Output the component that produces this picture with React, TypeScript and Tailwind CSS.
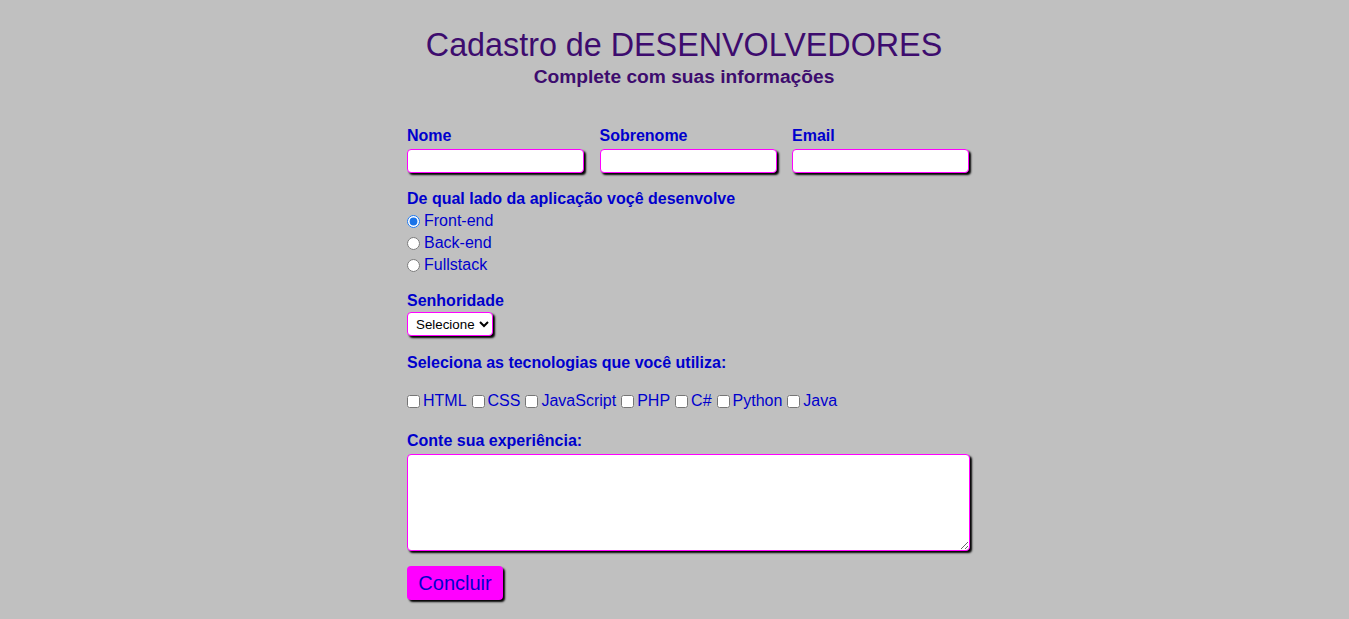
import React from "react";

const label = "block text-[16px] leading-[18px] font-bold text-[#0000cd]";
const field =
  "bg-white border border-[#ff00ff] rounded-[4px] shadow-[2px_2px_2px_#000] outline-none";

export default function App() {
  const techs = ["HTML", "CSS", "JavaScript", "PHP", "C#", "Python", "Java"];
  return (
    <div
      className="min-h-[619px] w-full bg-[#c0c0c0]"
      style={{ fontFamily: '"Liberation Sans", Arial, sans-serif' }}
    >
      <div className="mx-auto w-[573px] pl-[19px] pt-[27px] pb-[18px]">
        <div className="w-[554px] text-center text-[#3d0c6e]">
          <h1 className="text-[32.3px] leading-[37px] font-normal">
            Cadastro de DESENVOLVEDORES
          </h1>
          <h2 className="mt-[2px] text-[19.2px] leading-[22px] font-bold">
            Complete com suas informações
          </h2>
        </div>

        <div className="mt-[39px] flex gap-[15.5px]">
          {["Nome", "Sobrenome", "Email"].map((l) => (
            <div key={l} className="w-[177px] shrink-0">
              <label className={label}>{l}</label>
              <input type="text" className={`${field} mt-[4px] block h-[24px] w-[177px]`} />
            </div>
          ))}
        </div>

        <label className={`${label} mt-[17px]`}>
          De qual lado da aplicação voçê desenvolve
        </label>
        <div className="mt-[2px] flex flex-col text-[16px] text-[#0000cd]">
          {["Front-end", "Back-end", "Fullstack"].map((o, i) => (
            <div key={o} className="flex h-[22px] items-center">
              <input
                type="radio"
                name="lado"
                defaultChecked={i === 0}
                className="mr-[4px] h-[13px] w-[13px] accent-[#1a73e8]"
              />
              <span className="leading-[18px]">{o}</span>
            </div>
          ))}
        </div>

        <label className={`${label} mt-[16px]`}>Senhoridade</label>
        <select
          className={`${field} mt-[2px] block h-[24px] w-[86px] pl-[4px] pr-0 text-[13.33px] text-black`}
          defaultValue=""
        >
          <option value="">Selecione</option>
          <option>Júnior</option>
          <option>Pleno</option>
          <option>Sênior</option>
        </select>

        <label className={`${label} mt-[18px]`}>
          Seleciona as tecnologias que você utiliza:
        </label>
        <div className="mt-[18px] flex h-[22px] items-center whitespace-nowrap text-[16px] text-[#0000cd]">
          {techs.map((t, i) => (
            <React.Fragment key={t}>
              <input type="checkbox" className="mr-[3px] h-[13px] w-[13px]" />
              <span className={`leading-[18px] ${i < techs.length - 1 ? "mr-[5px]" : ""}`}>{t}</span>
            </React.Fragment>
          ))}
        </div>

        <label className={`${label} mt-[20px]`}>Conte sua experiência:</label>
        <textarea className={`${field} mt-[4px] block h-[97px] w-[563px]`} />

        <button
          type="button"
          className="mt-[15px] flex h-[34px] w-[96px] items-center justify-center rounded-[4px] bg-[#ff00ff] text-[20px] leading-[23px] text-[#0000cd] shadow-[2px_2px_2px_#000]"
        >
          Concluir
        </button>
      </div>
    </div>
  );
}
